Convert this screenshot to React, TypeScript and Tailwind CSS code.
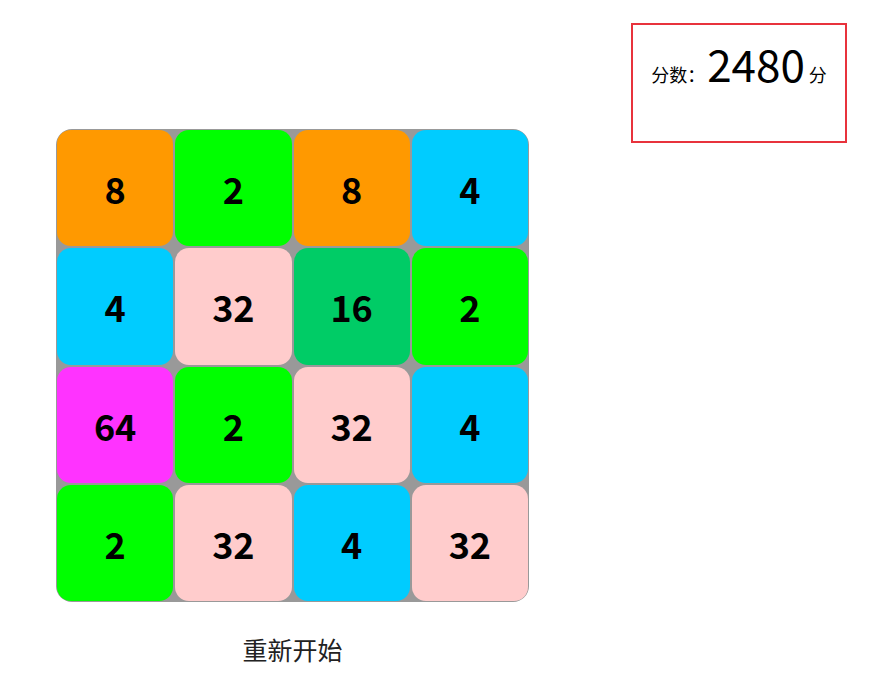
import React from 'react'

const board = [
  [8, 2, 8, 4],
  [4, 32, 16, 2],
  [64, 2, 32, 4],
  [2, 32, 4, 32],
]

const tileColor: Record<number, string> = {
  2: 'bg-[#00ff00]',
  4: 'bg-[#00ccff]',
  8: 'bg-[#ff9900]',
  16: 'bg-[#00cc66]',
  32: 'bg-[#ffcccc]',
  64: 'bg-[#ff33ff]',
}

export default function App() {
  return (
    <div
      className="w-[875px] h-[675px] bg-white flex text-black"
      style={{ fontFamily: '"Noto Sans CJK SC", "Noto Sans", sans-serif' }}
    >
      {/* game board + restart */}
      <div className="ml-[56px] mt-[129px] flex flex-col items-center">
        <div className="w-[473px] h-[473px] bg-[#999999] rounded-[16px] p-[1px] grid grid-cols-4 gap-[2px]">
          {board.flat().map((n, i) => (
            <div
              key={i}
              className={`${tileColor[n]} rounded-[14px] flex items-center justify-center text-[36px] font-bold leading-none`}
            >
              {n}
            </div>
          ))}
        </div>
        <button className="mt-[35px] text-[25px] leading-none text-[#222]">重新开始</button>
      </div>

      {/* score */}
      <div className="ml-[102px] mt-[23px] w-[216px] h-[120px] border-2 border-[#e8323c] flex justify-center items-baseline pt-[16px]">
        <span className="text-[18px]">分数：</span>
        <span className="text-[44px] leading-none ml-[2px]">2480</span>
        <span className="text-[18px] ml-[4px]">分</span>
      </div>
    </div>
  )
}
